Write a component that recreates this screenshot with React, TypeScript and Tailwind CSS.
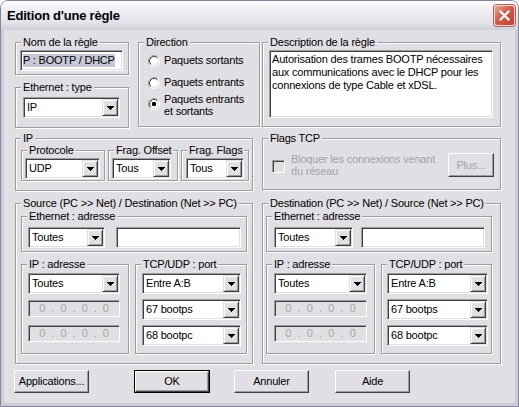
import React from 'react';

const SUNKEN =
  'border border-t-[#9d9da1] border-l-[#9d9da1] border-b-white border-r-white shadow-[inset_1px_1px_0_#404040,inset_-1px_-1px_0_#e0dfe3]';
const RAISED =
  'border border-t-white border-l-white border-b-[#404040] border-r-[#404040] shadow-[inset_-1px_-1px_0_#9d9da1]';

type Kids = { children?: React.ReactNode; className?: string };

function Group({ title, className = '', children }: Kids & { title: string }) {
  return (
    <fieldset
      className={`min-w-0 shrink-0 border border-[#9d9da1] shadow-[inset_1px_1px_0_#fff,1px_1px_0_#fff] ${className}`}
    >
      <legend className="ml-[5px] bg-[#e0dfe3] px-[2px] leading-[13px] text-black">{title}</legend>
      {children}
    </fieldset>
  );
}

function DropButton() {
  return (
    <span className="flex w-[16px] shrink-0 items-center justify-center border border-t-[#e0dfe3] border-l-[#e0dfe3] border-b-[#404040] border-r-[#404040] bg-[#e0dfe3] shadow-[inset_1px_1px_0_#fff,inset_-1px_-1px_0_#9d9da1]">
      <svg width="7" height="4" viewBox="0 0 7 4" shapeRendering="crispEdges">
        <path d="M0 0h7v1H0zM1 1h5v1H1zM2 2h3v1H2zM3 3h1v1H3z" fill="#000" />
      </svg>
    </span>
  );
}

function Combo({ value, className = '' }: { value: string; className?: string }) {
  return (
    <div className={`${SUNKEN} flex h-[21px] shrink-0 bg-white p-[1px] ${className}`}>
      <span className="flex-1 truncate pl-[2px] leading-[17px]">{value}</span>
      <DropButton />
    </div>
  );
}

function IpField({ className = '' }: { className?: string }) {
  return (
    <div
      className={`${SUNKEN} grid h-[17px] grid-cols-[1fr_auto_1fr_auto_1fr_auto_1fr] bg-[#e0dfe3] px-[4px] leading-[15px] text-[#a9a89f] ${className}`}
    >
      <span className="text-center">0</span>
      <span>.</span>
      <span className="text-center">0</span>
      <span>.</span>
      <span className="text-center">0</span>
      <span>.</span>
      <span className="text-center">0</span>
    </div>
  );
}

function Radio({ checked, children, className = '', two }: Kids & { checked?: boolean; two?: boolean }) {
  return (
    <div className={`flex items-start gap-[4px] ${className}`}>
      <svg width="12" height="12" viewBox="0 0 12 12" className={two ? 'mt-[5px] shrink-0' : 'mt-[1px] shrink-0'}>
        <circle cx="6" cy="6" r="5" fill="#fff" />
        <path d="M2.11 9.89A5.5 5.5 0 0 1 9.89 2.11" fill="none" stroke="#9d9da1" />
        <path d="M9.89 2.11A5.5 5.5 0 0 1 2.11 9.89" fill="none" stroke="#fff" />
        <path d="M2.82 9.18A4.5 4.5 0 0 1 9.18 2.82" fill="none" stroke="#404040" />
        <path d="M9.18 2.82A4.5 4.5 0 0 1 2.82 9.18" fill="none" stroke="#e0dfe3" />
        {checked && <rect x="4" y="4" width="4" height="4" rx="1.2" fill="#000" />}
      </svg>
      <span className={two ? 'leading-[12px]' : 'leading-[13px]'}>{children}</span>
    </div>
  );
}

function Button({ children, className = '', isDefault, disabled }: Kids & { isDefault?: boolean; disabled?: boolean }) {
  const inner = (
    <div
      className={`${RAISED} flex h-full w-full items-center justify-center bg-[#e0dfe3] ${disabled ? 'text-[#a3a3a8]' : ''}`}
    >
      {children}
    </div>
  );
  return (
    <div className={`h-[23px] shrink-0 ${isDefault ? 'border border-black' : ''} ${className}`}>{inner}</div>
  );
}

function TitleBar() {
  return (
    <div className="flex h-[29px] items-center rounded-t-[7px] bg-[linear-gradient(#fdfdfe,#ededf2_35%,#e2e2e9_75%,#d0d0da)] pl-[6px] pr-[3px]">
      <span className="text-[13px] font-bold">Edition d'une règle</span>
      <div className="ml-auto flex h-[21px] w-[21px] items-center justify-center rounded-[3px] border border-[#f4d6d0] bg-[linear-gradient(135deg,#eaa594,#d45c4b_45%,#bf3f30)] shadow-[0_0_0_1px_#b06060]">
        <svg width="11" height="11" viewBox="0 0 11 11">
          <path d="M1.5 1.5l8 8M9.5 1.5l-8 8" stroke="#fff" strokeWidth="2.2" strokeLinecap="square" />
        </svg>
      </div>
    </div>
  );
}

export default function App() {
  return (
    <div className="h-[407px] w-[519px] font-['Liberation_Sans',Arial,sans-serif] text-[11px] tracking-[-0.2px] text-black">
      <div className="flex h-full flex-col rounded-t-[8px] border border-[#85859b]">
        <TitleBar />
        <div className="flex flex-1 flex-col border-x-[3px] border-b-[3px] border-[#cdcdd9] bg-[#e0dfe3] pl-[11px]">
          {/* row 1 */}
          <div className="mt-[6px] flex">
            <div className="flex w-[114px] flex-col">
              <Group title="Nom de la règle" className="h-[39px] w-[114px]">
                <div className={`${SUNKEN} ml-[4px] mt-[1px] flex h-[21px] w-[103px] items-center bg-white pl-[2px]`}>
                  <span className="bg-[#c6c8d7] leading-[13px]">P : BOOTP / DHCP</span>
                </div>
              </Group>
              <Group title="Ethernet : type" className="mt-[6px] h-[47px] w-[114px]">
                <Combo value="IP" className="ml-[7px] mt-[3px] w-[97px]" />
              </Group>
            </div>
            <Group title="Direction" className="ml-[9px] h-[91px] w-[122px]">
              <div className="flex flex-col pl-[9px]">
                <Radio className="mt-[5px]">Paquets sortants</Radio>
                <Radio className="mt-[9px]">Paquets entrants</Radio>
                <Radio className="mt-[4px]" checked two>
                  Paquets entrants
                  <br />
                  et sortants
                </Radio>
              </div>
            </Group>
            <Group title="Description de la règle" className="ml-[2px] h-[91px] w-[239px]">
              <div className={`${SUNKEN} ml-[6px] mt-[1px] h-[68px] w-[224px] bg-white pl-[2px] pt-[2px] leading-[13px]`}>
                Autorisation des trames BOOTP nécessaires
                <br />
                aux communications avec le DHCP pour les
                <br />
                connexions de type Cable et xDSL.
              </div>
            </Group>
          </div>

          {/* row 2 */}
          <div className="mt-[4px] flex">
            <Group title="IP" className="h-[59px] w-[238px]">
              <div className="-mt-[1px] flex pl-[5px]">
                <Group title="Protocole" className="h-[37px] w-[84px]">
                  <Combo value="UDP" className="ml-[3px] mt-[1px] w-[75px]" />
                </Group>
                <Group title="Frag. Offset" className="ml-[3px] h-[37px] w-[70px]">
                  <Combo value="Tous" className="ml-[3px] mt-[1px] w-[59px]" />
                </Group>
                <Group title="Frag. Flags" className="ml-[3px] h-[37px] w-[68px]">
                  <Combo value="Tous" className="ml-[4px] mt-[1px] w-[58px]" />
                </Group>
              </div>
            </Group>
            <Group title="Flags TCP" className="ml-[9px] h-[58px] w-[239px]">
              <div className="mt-[8px] flex pl-[9px] pr-[6px]">
                <span className={`${SUNKEN} mt-[7px] h-[13px] w-[13px] shrink-0 bg-[#e0dfe3]`} />
                <span className="ml-[6px] leading-[12px] text-[#a3a3a8]">
                  Bloquer les connexions venant
                  <br />
                  du réseau
                </span>
                <Button disabled className="ml-auto !h-[24px] w-[46px]">
                  Plus...
                </Button>
              </div>
            </Group>
          </div>

          {/* row 3 */}
          <div className="mt-[6px] flex">
            <Group title="Source (PC >> Net) / Destination (Net >> PC)" className="h-[167px] w-[238px]">
              <div className="pl-[5px]">
                <Group title="Ethernet : adresse" className="h-[42px] w-[226px]">
                  <div className="mt-[4px] flex pl-[6px]">
                    <Combo value="Toutes" className="w-[77px]" />
                    <div className={`${SUNKEN} ml-[11px] h-[21px] w-[125px] bg-white`} />
                  </div>
                </Group>
                <div className="mt-[6px] flex">
                  <Group title="IP : adresse" className="h-[96px] w-[108px]">
                    <div className="mt-[2px] flex flex-col pl-[6px]">
                      <Combo value="Toutes" className="w-[92px]" />
                      <IpField className="mt-[6px] w-[92px]" />
                      <IpField className="mt-[8px] w-[92px]" />
                    </div>
                  </Group>
                  <Group title="TCP/UDP : port" className="ml-[6px] h-[96px] w-[112px]">
                    <div className="mt-[2px] flex flex-col gap-[5px] pl-[6px]">
                      <Combo value="Entre A:B" className="w-[99px]" />
                      <Combo value="67 bootps" className="w-[99px]" />
                      <Combo value="68 bootpc" className="w-[99px]" />
                    </div>
                  </Group>
                </div>
              </div>
            </Group>
            <Group title="Destination (PC >> Net) / Source (Net >> PC)" className="ml-[9px] h-[167px] w-[239px]">
              <div className="pl-[3px]">
                <Group title="Ethernet : adresse" className="h-[42px] w-[226px]">
                  <div className="mt-[4px] flex pl-[7px]">
                    <Combo value="Toutes" className="w-[79px]" />
                    <div className={`${SUNKEN} ml-[8px] h-[21px] w-[124px] bg-white`} />
                  </div>
                </Group>
                <div className="mt-[6px] flex">
                  <Group title="IP : adresse" className="h-[96px] w-[109px]">
                    <div className="mt-[2px] flex flex-col pl-[7px]">
                      <Combo value="Toutes" className="w-[93px]" />
                      <IpField className="mt-[6px] w-[93px]" />
                      <IpField className="mt-[8px] w-[93px]" />
                    </div>
                  </Group>
                  <Group title="TCP/UDP : port" className="ml-[6px] h-[96px] w-[111px]">
                    <div className="mt-[2px] flex flex-col gap-[5px] pl-[5px]">
                      <Combo value="Entre A:B" className="w-[101px]" />
                      <Combo value="67 bootps" className="w-[101px]" />
                      <Combo value="68 bootpc" className="w-[101px]" />
                    </div>
                  </Group>
                </div>
              </div>
            </Group>
          </div>

          {/* buttons */}
          <div className="-ml-[1px] mt-[6px] flex">
            <Button className="w-[75px]">Applications...</Button>
            <Button isDefault className="ml-[45px] w-[76px]">
              OK
            </Button>
            <Button className="ml-[24px] w-[75px]">Annuler</Button>
            <Button className="ml-[26px] w-[75px]">Aide</Button>
          </div>
        </div>
      </div>
    </div>
  );
}
